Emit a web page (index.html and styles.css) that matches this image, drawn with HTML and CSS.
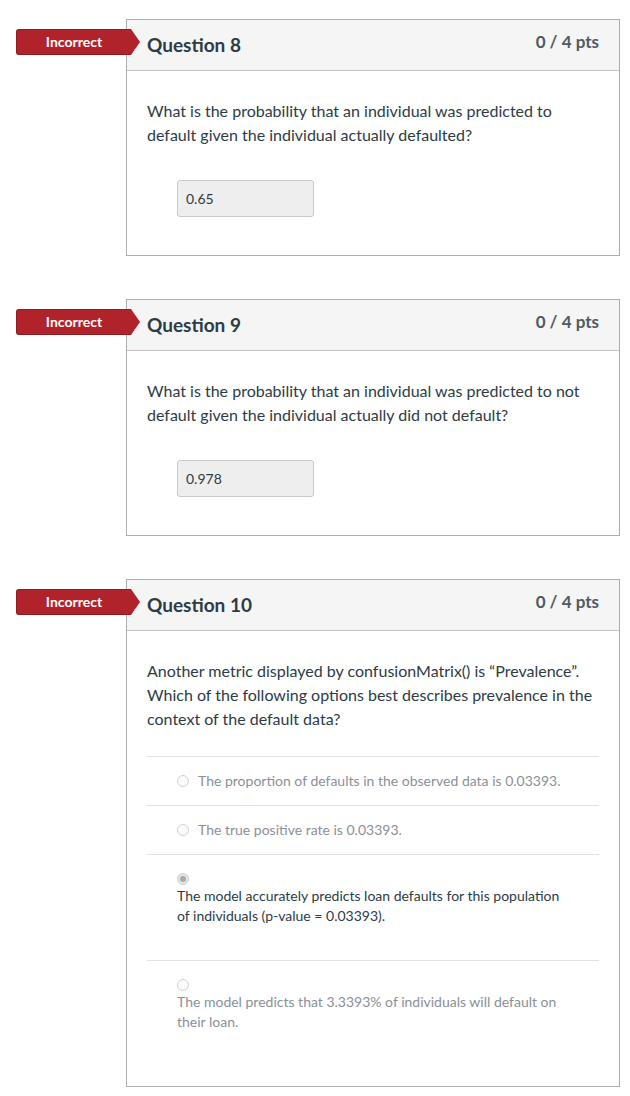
FILE: index.html
```html
<!DOCTYPE html>
<html>
<head>
<meta charset="utf-8">
<link rel="stylesheet" href="styles.css">
</head>
<body>
<div class="page">
  <div class="question">
    <div class="badge">Incorrect</div>
    <div class="q-header">
      <span class="q-title">Question 8</span>
      <span class="q-pts">0 / 4 pts</span>
    </div>
    <div class="q-body">
      <p class="q-text">What is the probability that an individual was predicted to default given the individual actually defaulted?</p>
      <div class="answer-wrap"><div class="answer-input">0.65</div></div>
    </div>
  </div>

  <div class="question">
    <div class="badge">Incorrect</div>
    <div class="q-header">
      <span class="q-title">Question 9</span>
      <span class="q-pts">0 / 4 pts</span>
    </div>
    <div class="q-body">
      <p class="q-text">What is the probability that an individual was predicted to not default given the individual actually did not default?</p>
      <div class="answer-wrap"><div class="answer-input">0.978</div></div>
    </div>
  </div>

  <div class="question">
    <div class="badge">Incorrect</div>
    <div class="q-header">
      <span class="q-title">Question 10</span>
      <span class="q-pts">0 / 4 pts</span>
    </div>
    <div class="q-body q-body-mc">
      <p class="q-text">Another metric displayed by confusionMatrix() is “Prevalence”. Which of the following options best describes prevalence in the context of the default data?</p>
      <div class="answers">
        <div class="ans ans-inline">
          <span class="radio"></span>
          <span class="ans-text">The proportion of defaults in the observed data is 0.03393.</span>
        </div>
        <div class="ans ans-inline">
          <span class="radio"></span>
          <span class="ans-text">The true positive rate is 0.03393.</span>
        </div>
        <div class="ans ans-block selected">
          <span class="radio checked"></span>
          <div class="ans-text">The model accurately predicts loan defaults for this population of individuals (p-value = 0.03393).</div>
        </div>
        <div class="ans ans-block">
          <span class="radio"></span>
          <div class="ans-text">The model predicts that 3.3393% of individuals will default on their loan.</div>
        </div>
      </div>
    </div>
  </div>
</div>
</body>
</html>
```

FILE: styles.css
```css
* { box-sizing: border-box; }
html, body {
  margin: 0;
  padding: 0;
  background: #ffffff;
  font-family: Lato, "Open Sans", "Liberation Sans", sans-serif;
  color: #2d3b45;
}
.page {
  padding: 19px 0 0 126px;
  width: 620px;
  display: flex;
  flex-direction: column;
  gap: 43px;
}
.question {
  position: relative;
  border: 1px solid #adadad;
  background: #fff;
}
.badge {
  position: absolute;
  left: -111px;
  top: 9px;
  width: 115px;
  height: 26px;
  background: #b1232a;
  border: 1px solid #8f1c22;
  border-right: none;
  border-radius: 3px 0 0 3px;
  color: #fff;
  font-weight: 700;
  font-size: 14px;
  line-height: 23px;
  text-align: center;
  padding-left: 0;
}
.badge::after {
  content: "";
  position: absolute;
  right: -9px;
  top: -1px;
  width: 0;
  height: 0;
  border-top: 13px solid transparent;
  border-bottom: 13px solid transparent;
  border-left: 9px solid #b1232a;
}
.q-header {
  height: 51px;
  background: #f5f5f5;
  border-bottom: 1px solid #c4c4c4;
  display: flex;
  align-items: center;
  justify-content: space-between;
  padding: 0 20px 0 20px;
}
.q-title {
  font-size: 19px;
  font-weight: 700;
  color: #2d3b45;
  margin-top: -2px;
}
.q-pts {
  font-size: 17px;
  font-weight: 700;
  color: #4f5a62;
  margin-top: -7px;
}
.q-body {
  padding: 28px 20px 38px 20px;
}
.q-text {
  margin: 0;
  font-size: 16px;
  line-height: 24px;
  color: #2d3b45;
}
.answer-wrap {
  margin-top: 33px;
  padding-left: 30px;
}
.answer-input {
  width: 137px;
  height: 37px;
  background: #eeeeee;
  border: 1px solid #c9c9c9;
  border-radius: 3px;
  font-size: 14px;
  line-height: 35px;
  padding-left: 8px;
  color: #2d3b45;
}
.q-body-mc {
  padding-bottom: 20px;
}
.answers {
  margin-top: 25px;
}
.ans {
  border-top: 1px solid #e2e2e2;
  font-size: 14px;
  line-height: 20px;
  color: #8a9096;
}
.ans-inline {
  display: flex;
  align-items: center;
  gap: 9px;
  height: 49px;
  padding: 0 0 0 30px;
}
.ans-block {
  padding: 18px 0 34px 30px;
  display: flex;
  flex-direction: column;
  align-items: flex-start;
}
.ans-block .radio {
  margin-bottom: 1px;
}
.ans.selected {
  color: #2d3b45;
}
.ans-block .ans-text {
  max-width: 392px;
}
.radio {
  display: inline-block;
  width: 12px;
  height: 12px;
  border-radius: 50%;
  border: 1px solid #d2d2d2;
  background: #fbfbfb;
  flex: none;
  position: relative;
}
.radio.checked {
  background: #e6e6e6;
  border-color: #cfcfcf;
}
.radio.checked::after {
  content: "";
  position: absolute;
  left: 2px;
  top: 2px;
  width: 6px;
  height: 6px;
  border-radius: 50%;
  background: #a9a9a9;
}
```
